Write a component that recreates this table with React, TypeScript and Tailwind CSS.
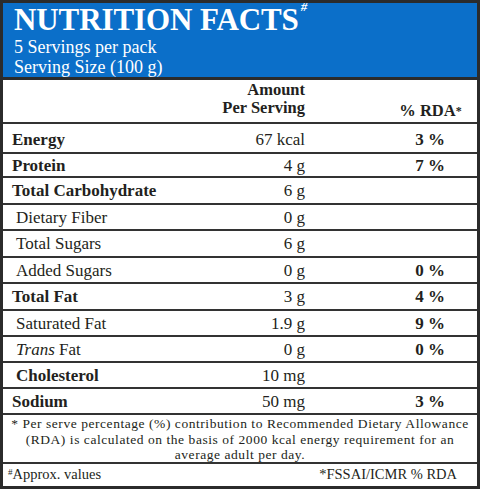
type Row = {
  name: string;
  bold?: boolean;
  indent?: boolean;
  italicTrans?: boolean;
  amount: string;
  rda?: string;
  h: string;
};

const rows: Row[] = [
  { name: "Energy", bold: true, amount: "67 kcal", rda: "3 %", h: "h-[31px] pt-[3px]" },
  { name: "Protein", bold: true, amount: "4 g", rda: "7 %", h: "h-[24px]" },
  { name: "Total Carbohydrate", bold: true, amount: "6 g", h: "h-[27px]" },
  { name: "Dietary Fiber", indent: true, amount: "0 g", h: "h-[26px]" },
  { name: "Total Sugars", indent: true, amount: "6 g", h: "h-[27px]" },
  { name: "Added Sugars", indent: true, amount: "0 g", rda: "0 %", h: "h-[26px]" },
  { name: "Total Fat", bold: true, amount: "3 g", rda: "4 %", h: "h-[27px]" },
  { name: "Saturated Fat", indent: true, amount: "1.9 g", rda: "9 %", h: "h-[26px]" },
  { name: "Fat", indent: true, italicTrans: true, amount: "0 g", rda: "0 %", h: "h-[26px]" },
  { name: "Cholesterol", bold: true, indent: true, amount: "10 mg", h: "h-[26px]" },
  { name: "Sodium", bold: true, amount: "50 mg", rda: "3 %", h: "h-[26px]" },
];

export default function App() {
  return (
    <div className="w-[480px] h-[489px] bg-white border-[3px] border-[#2b2b2b] flex flex-col font-['Liberation_Serif',serif] text-[#231f20]">
      {/* Blue header */}
      <div className="h-[75px] bg-[#0b6fc9] text-white pl-[11px] pt-[1px] border-b-[3px] border-[#2b2b2b] box-content">
        <div className="text-[31px] font-bold leading-[32px] tracking-[-0.1px]">
          NUTRITION FACTS
          <sup className="text-[13px] font-bold italic align-top relative top-[3px] ml-[2px]">#</sup>
        </div>
        <div className="text-[18px] leading-[20px] mt-[1px]">5 Servings per pack</div>
        <div className="text-[18px] leading-[20px]">Serving Size (100 g)</div>
      </div>

      {/* Column header row */}
      <div className="h-[43px] flex items-end pb-[5px] text-[16.5px] font-bold">
        <div className="flex-1" />
        <div className="w-[110px] text-right leading-[18px]">
          <div>Amount</div>
          <div>Per Serving</div>
        </div>
        <div className="w-[78px]" />
        <div className="w-[94px] text-center leading-[18px] pl-[1px] translate-y-[3px]">
          % RDA<span className="text-[12px] align-top">*</span>
        </div>
      </div>

      {rows.map((r, i) => (
        <div key={i} className={`${r.h} border-t-2 border-[#333] flex items-center text-[17px]`}>
          <div className={`flex-1 ${r.indent ? "pl-[13px]" : "pl-[9px]"} ${r.bold ? "font-bold" : ""}`}>
            {r.italicTrans && <span className="italic">Trans </span>}
            {r.name}
          </div>
          <div className="w-[110px] text-right">{r.amount}</div>
          <div className="w-[78px]" />
          <div className="w-[94px] text-center font-bold">{r.rda ?? ""}</div>
        </div>
      ))}

      {/* Footnote */}
      <div className="h-[49px] border-t-2 border-[#333] text-[13.5px] leading-[15.5px] tracking-[0.55px] text-center pt-[1px]">
        * Per serve percentage (%) contribution to Recommended Dietary Allowance
        <br />
        (RDA) is calculated on the basis of 2000 kcal energy requirement for an
        <br />
        average adult per day.
      </div>

      {/* Bottom row */}
      <div className="flex-1 border-t-2 border-[#333] flex items-center justify-between px-[5px] text-[14.5px]">
        <div>
          <sup className="text-[9px]">#</sup>Approx. values
        </div>
        <div className="pr-[15px]">*FSSAI/ICMR % RDA</div>
      </div>
    </div>
  );
}
